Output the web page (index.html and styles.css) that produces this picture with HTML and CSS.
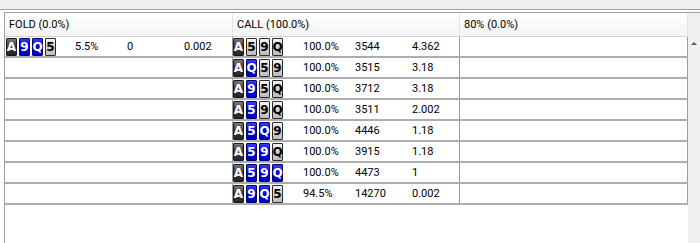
FILE: index.html
```html
<!DOCTYPE html>
<html>
<head>
<meta charset="utf-8">
<link rel="stylesheet" href="styles.css">
</head>
<body>
<div class="topband"></div>
<div class="frame">
  <div class="table">
    <div class="head">
      <div class="hcell c1">FOLD (0.0%)</div>
      <div class="hcell c2">CALL (100.0%)</div>
      <div class="hcell c3">80% (0.0%)</div>
    </div>

    <div class="row">
      <div class="cell c1">
        <div class="cards"><span class="card d">A</span><span class="card b">9</span><span class="card b">Q</span><span class="card g">5</span></div>
        <span>5.5%</span><span>0</span><span>0.002</span>
      </div>
      <div class="cell c2">
        <div class="cards"><span class="card d">A</span><span class="card g">5</span><span class="card g">9</span><span class="card g">Q</span></div>
        <span>100.0%</span><span>3544</span><span>4.362</span>
      </div>
      <div class="cell c3"></div>
    </div>

    <div class="row">
      <div class="cell c1"></div>
      <div class="cell c2">
        <div class="cards"><span class="card d">A</span><span class="card b">Q</span><span class="card g">5</span><span class="card g">9</span></div>
        <span>100.0%</span><span>3515</span><span>3.18</span>
      </div>
      <div class="cell c3"></div>
    </div>

    <div class="row">
      <div class="cell c1"></div>
      <div class="cell c2">
        <div class="cards"><span class="card d">A</span><span class="card b">9</span><span class="card g">5</span><span class="card g">Q</span></div>
        <span>100.0%</span><span>3712</span><span>3.18</span>
      </div>
      <div class="cell c3"></div>
    </div>

    <div class="row">
      <div class="cell c1"></div>
      <div class="cell c2">
        <div class="cards"><span class="card d">A</span><span class="card b">5</span><span class="card g">9</span><span class="card g">Q</span></div>
        <span>100.0%</span><span>3511</span><span>2.002</span>
      </div>
      <div class="cell c3"></div>
    </div>

    <div class="row">
      <div class="cell c1"></div>
      <div class="cell c2">
        <div class="cards"><span class="card d">A</span><span class="card b">5</span><span class="card b">Q</span><span class="card g">9</span></div>
        <span>100.0%</span><span>4446</span><span>1.18</span>
      </div>
      <div class="cell c3"></div>
    </div>

    <div class="row">
      <div class="cell c1"></div>
      <div class="cell c2">
        <div class="cards"><span class="card d">A</span><span class="card b">5</span><span class="card b">9</span><span class="card g">Q</span></div>
        <span>100.0%</span><span>3915</span><span>1.18</span>
      </div>
      <div class="cell c3"></div>
    </div>

    <div class="row">
      <div class="cell c1"></div>
      <div class="cell c2">
        <div class="cards"><span class="card d">A</span><span class="card b">5</span><span class="card b">9</span><span class="card b">Q</span></div>
        <span>100.0%</span><span>4473</span><span>1</span>
      </div>
      <div class="cell c3"></div>
    </div>

    <div class="row">
      <div class="cell c1"></div>
      <div class="cell c2">
        <div class="cards"><span class="card d">A</span><span class="card b">9</span><span class="card b">Q</span><span class="card g">5</span></div>
        <span>94.5%</span><span>14270</span><span>0.002</span>
      </div>
      <div class="cell c3"></div>
    </div>
  </div>
  <div class="scroll"><span class="arrow"></span></div>
</div>
</body>
</html>
```

FILE: styles.css
```css
html, body {
  margin: 0;
  padding: 0;
  background: #ffffff;
  width: 700px;
  height: 243px;
  overflow: hidden;
  font-family: Roboto, "Liberation Sans", sans-serif;
  font-size: 11px;
  color: #000;
}

.topband {
  height: 9px;
  background: #f0f0f0;
  border-bottom: 1px solid #a0a0a0;
}

.frame {
  margin-top: 2px;
  margin-left: 4px;
  height: 231px;
  box-sizing: border-box;
  border-top: 1px solid #a0a0a0;
  border-left: 1px solid #a0a0a0;
  display: flex;
}

.table {
  width: 683px;
  flex: none;
  display: flex;
  flex-direction: column;
}

.head {
  display: flex;
  height: 23px;
  border-bottom: 1px solid #d2d2d2;
  background: linear-gradient(#ffffff, #f3f4f6);
}

.hcell {
  box-sizing: border-box;
  border-right: 1px solid #e4e4e4;
  padding-left: 4px;
  display: flex;
  align-items: center;
  white-space: nowrap;
}

.c1 { width: 228px; }
.c2 { width: 227px; }
.c3 { width: 228px; }

.row {
  display: flex;
  height: 19px;
  border-bottom: 2px solid #adadad;
}

.cell {
  box-sizing: border-box;
  border-right: 1px solid #9c9c9c;
  display: grid;
  grid-template-columns: 70px 52px 57px 1fr;
  align-items: center;
  white-space: nowrap;
}

.cell.c1 .cards { margin-left: 1px; }

.cards {
  display: flex;
  gap: 2px;
  align-items: center;
}

.card {
  box-sizing: border-box;
  width: 11px;
  height: 18px;
  border: 1px solid #1a1a1a;
  border-radius: 1px;
  display: flex;
  align-items: center;
  justify-content: center;
  font-family: "DejaVu Sans", "Liberation Sans", sans-serif;
  font-weight: bold;
  font-size: 12px;
  line-height: 1;
  overflow: visible;
}

.card.d {
  background: linear-gradient(#7a7a7a, #3a3a3a 45%, #262626);
  color: #ffffff;
}

.card.b {
  background: linear-gradient(#3a3aff, #0000dc 50%, #0000c4);
  border-color: #00006a;
  color: #ffffff;
}

.card.g {
  background: linear-gradient(#f4f4f4, #cfcfcf 55%, #bdbdbd);
  border-color: #2a2a2a;
  color: #000000;
}

.scroll {
  flex: 1;
  background: #f0f0f0;
  display: flex;
  justify-content: center;
  padding-top: 29px;
  box-sizing: border-box;
}

.arrow {
  width: 0;
  height: 0;
  border-left: 3px solid transparent;
  border-right: 3px solid transparent;
  border-bottom: 3px solid #5a5a5a;
}
```
